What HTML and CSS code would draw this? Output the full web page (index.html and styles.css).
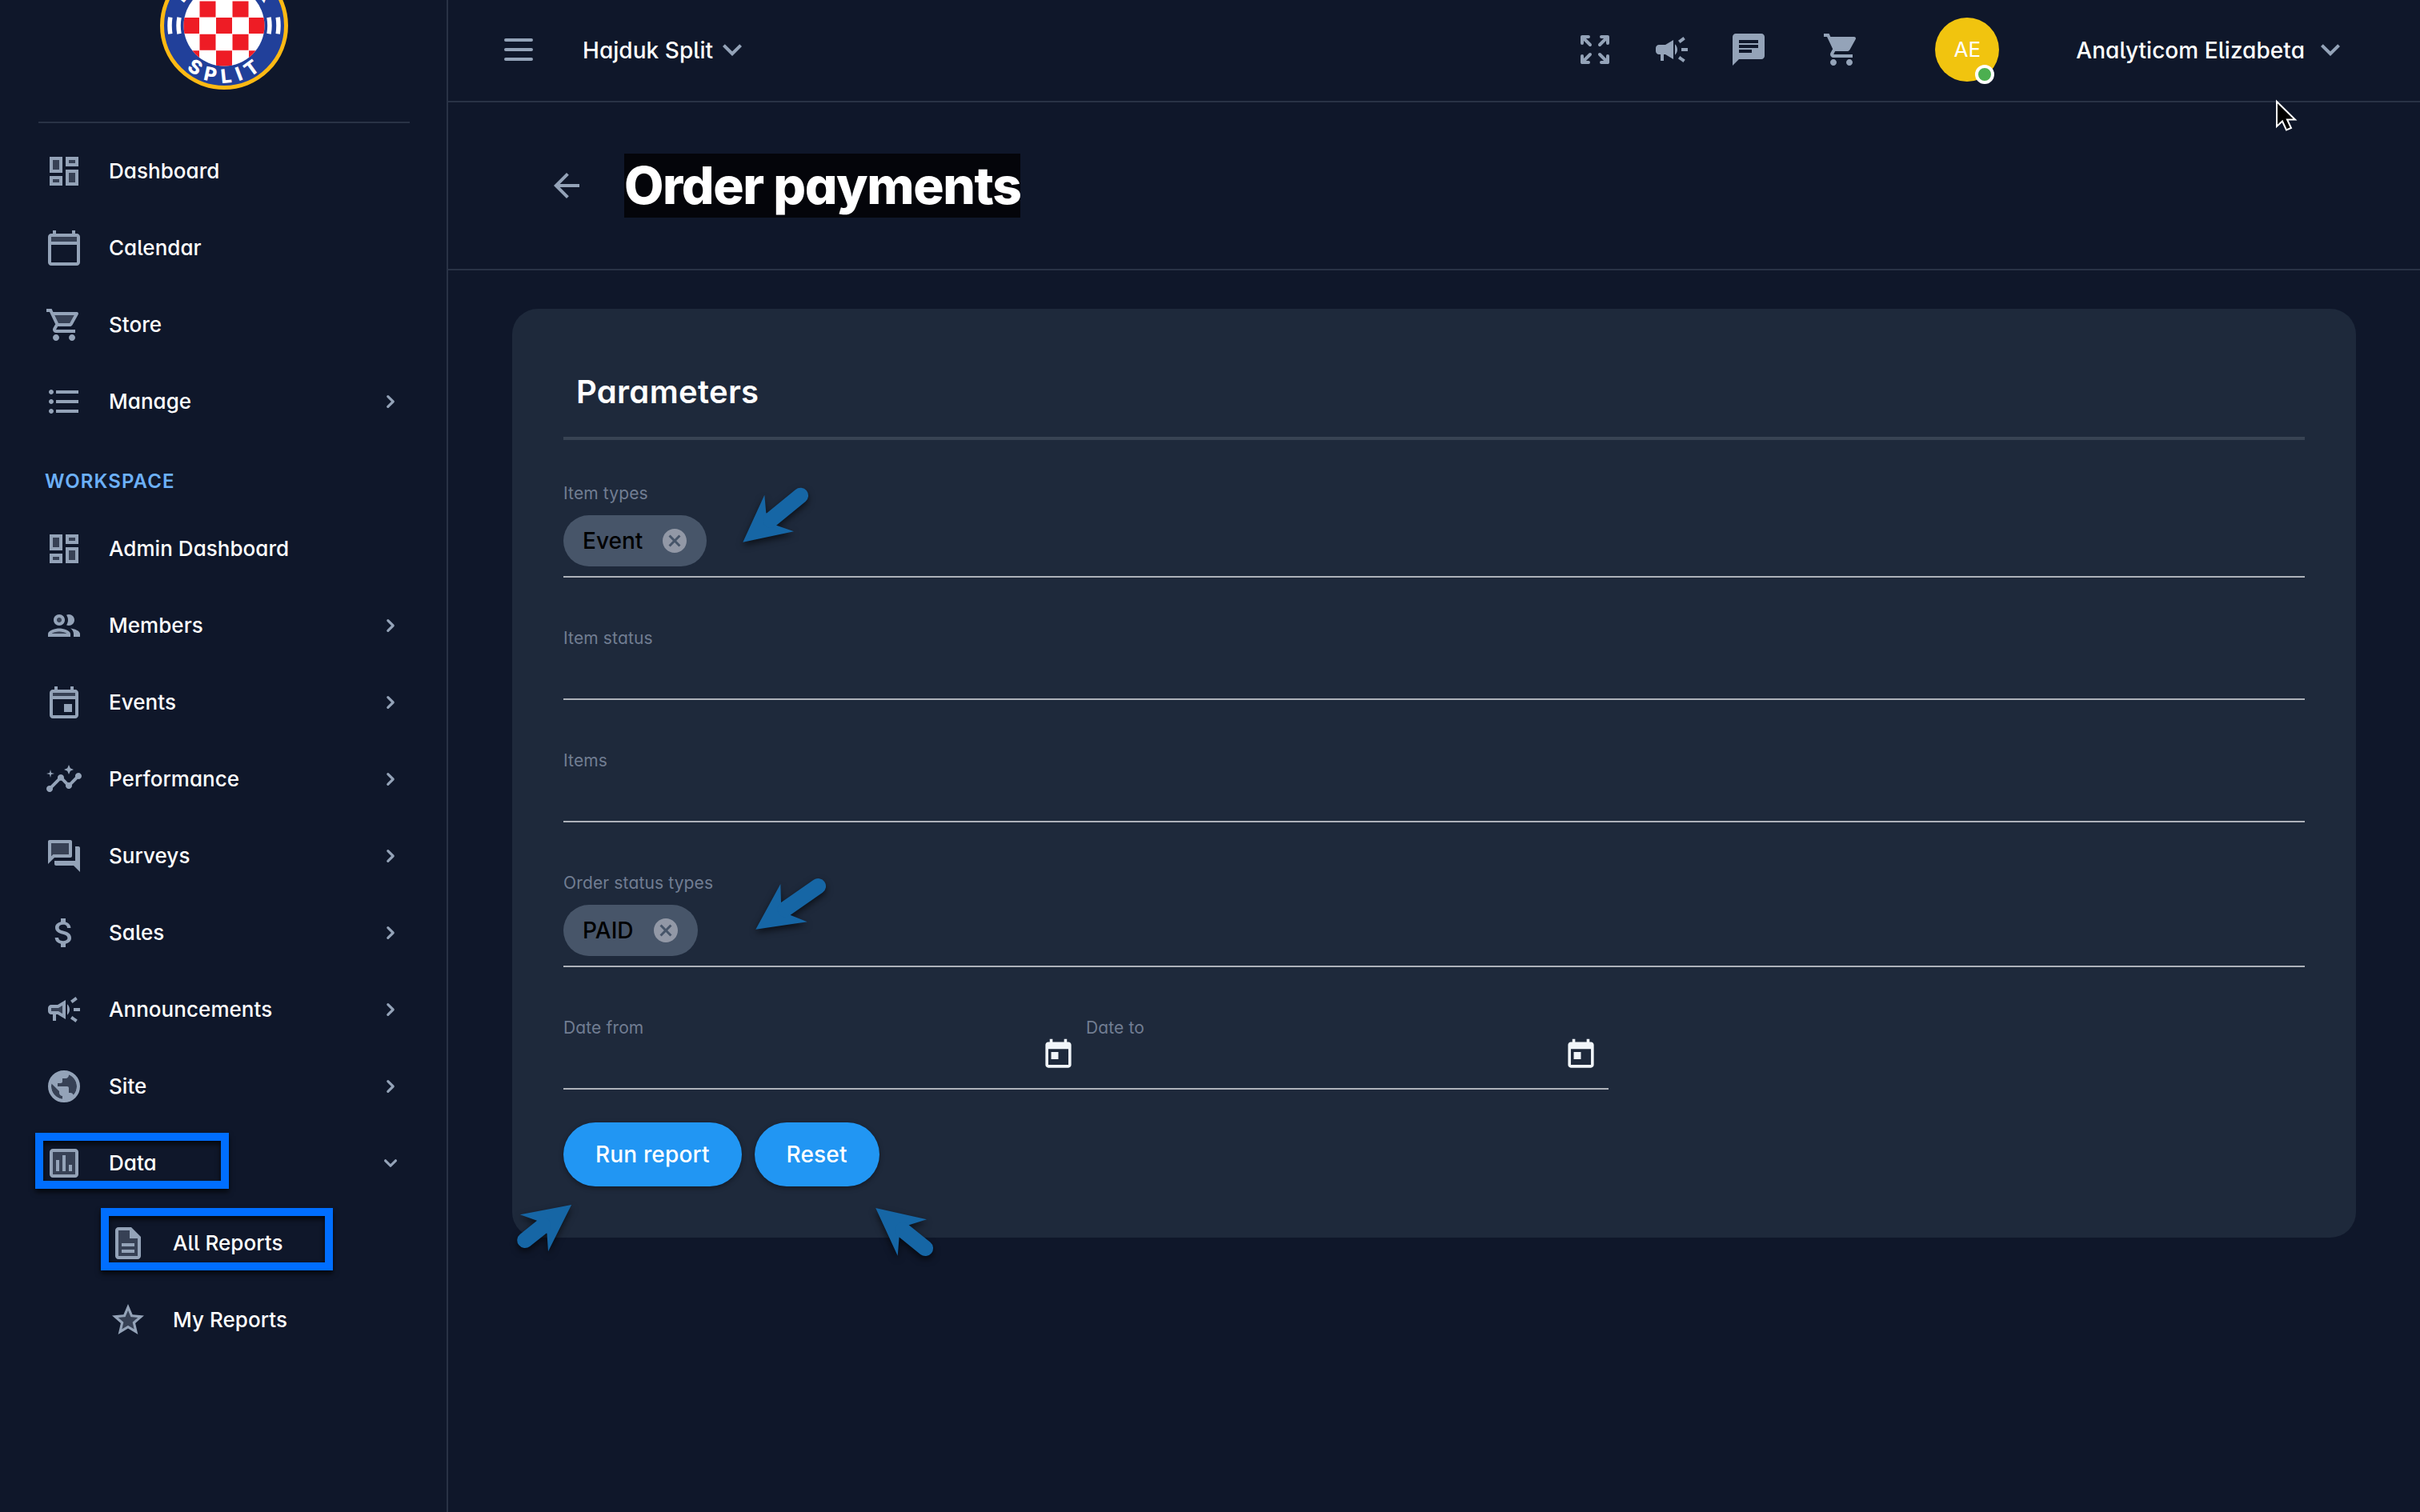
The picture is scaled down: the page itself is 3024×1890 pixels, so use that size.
FILE: index.html
```html
<!DOCTYPE html>
<html lang="en">
<head>
  <meta charset="UTF-8">
  <title>Order payments</title>
  <link rel="stylesheet" href="styles.css">
</head>
<body>

  <!-- icon sprite -->
  <svg class="sprite" xmlns="http://www.w3.org/2000/svg">
    <symbol id="i-dashboard" viewBox="0 0 24 24">
      <path opacity=".3" d="M5 5h4v6H5zM15 13h4v6h-4zM5 17h4v2H5zM15 5h4v2h-4z"/>
      <path d="M3 13h8V3H3v10zm2-8h4v6H5V5zm8 16h8V11h-8v10zm2-8h4v6h-4v-6zM13 3v6h8V3h-8zm6 4h-4V5h4v2zM3 21h8v-6H3v6zm2-4h4v2H5v-2z"/>
    </symbol>
    <symbol id="i-calendar" viewBox="0 0 24 24">
      <path opacity=".3" d="M4 5h16v3H4z"/>
      <path d="M20 3h-1V1h-2v2H7V1H5v2H4c-1.1 0-2 .9-2 2v16c0 1.1.9 2 2 2h16c1.1 0 2-.9 2-2V5c0-1.1-.9-2-2-2zm0 18H4V10h16v11zm0-13H4V5h16v3z"/>
    </symbol>
    <symbol id="i-store" viewBox="0 0 24 24">
      <path opacity=".3" d="M15.55 11l2.76-5H6.16l2.37 5z"/>
      <path d="M15.55 13c.75 0 1.41-.41 1.75-1.03l3.58-6.49c.37-.66-.11-1.48-.87-1.48H5.21l-.94-2H1v2h2l3.6 7.59-1.35 2.44C4.52 15.37 5.48 17 7 17h12v-2H7l1.1-2h7.45zM6.16 6h12.15l-2.76 5H8.53L6.16 6zM7 18c-1.1 0-1.99.9-1.99 2S5.9 22 7 22s2-.9 2-2-.9-2-2-2zm10 0c-1.1 0-1.99.9-1.99 2s.89 2 1.99 2 2-.9 2-2-.9-2-2-2z"/>
    </symbol>
    <symbol id="i-list" viewBox="0 0 24 24">
      <path d="M4 10.5c-.83 0-1.5.67-1.5 1.5s.67 1.5 1.5 1.5 1.5-.67 1.5-1.5-.67-1.5-1.5-1.5zm0-6c-.83 0-1.5.67-1.5 1.5S3.17 7.5 4 7.5 5.5 6.83 5.5 6 4.83 4.5 4 4.5zm0 12c-.83 0-1.5.68-1.5 1.5s.68 1.5 1.5 1.5 1.5-.68 1.5-1.5-.67-1.5-1.5-1.5zM7 19h14v-2H7v2zm0-6h14v-2H7v2zm0-8v2h14V5H7z"/>
    </symbol>
    <symbol id="i-group" viewBox="0 0 24 24">
      <path opacity=".3" d="M4.340 17h9.320c-.84-.58-2.870-1.250-4.660-1.250S5.180 16.420 4.340 17zM9 7a1.500 1.500 0 100 3 1.500 1.500 0 000-3z"/>
      <path d="M9 13.750c-2.340 0-7 1.170-7 3.500V19h14v-1.750c0-2.330-4.660-3.500-7-3.500zM4.340 17c.84-.58 2.870-1.250 4.660-1.250s3.820.67 4.660 1.250H4.340zM9 12c1.930 0 3.500-1.570 3.500-3.500S10.930 5 9 5 5.500 6.570 5.500 8.500 7.070 12 9 12zm0-5c.83 0 1.500.67 1.500 1.500S9.830 10 9 10s-1.500-.67-1.500-1.500S8.170 7 9 7zm7.040 6.810c1.160.84 1.960 1.960 1.960 3.440V19h4v-1.750c0-2.020-3.500-3.170-5.960-3.440zM15 12c1.930 0 3.500-1.570 3.500-3.500S16.930 5 15 5c-.54 0-1.040.13-1.500.35.63.89 1 1.980 1 3.150s-.37 2.260-1 3.150c.46.22.96.35 1.500.35z"/>
    </symbol>
    <symbol id="i-event" viewBox="0 0 24 24">
      <path opacity=".3" d="M5 6h14v2H5z"/>
      <path d="M19 4h-1V2h-2v2H8V2H6v2H5c-1.11 0-1.99.9-1.99 2L3 20c0 1.1.89 2 2 2h14c1.1 0 2-.9 2-2V6c0-1.1-.9-2-2-2zm0 16H5V10h14v10zm0-12H5V6h14v2zm-7 5h5v5h-5z"/>
    </symbol>
    <symbol id="i-insights" viewBox="0 0 24 24">
      <path d="M21 8c-1.45 0-2.26 1.44-1.93 2.51l-3.55 3.56c-.3-.09-.74-.09-1.04 0l-2.55-2.55C12.27 10.45 11.46 9 10 9c-1.45 0-2.27 1.44-1.93 2.52l-4.56 4.55C2.44 15.74 1 16.55 1 18c0 1.1.9 2 2 2 1.45 0 2.26-1.44 1.93-2.51l4.55-4.56c.3.09.74.09 1.04 0l2.55 2.55C12.73 16.55 13.54 18 15 18c1.45 0 2.27-1.44 1.93-2.52l3.56-3.55C21.56 12.26 23 11.45 23 10c0-1.1-.9-2-2-2zM15 9l.94-2.07L18 6l-2.06-.93L15 3l-.92 2.07L12 6l2.08.93zM3.5 11L4 9l2-.5L4 8l-.5-2L3 8l-2 .5L3 9z"/>
    </symbol>
    <symbol id="i-surveys" viewBox="0 0 24 24">
      <path opacity=".3" d="M15 4v7H5.17L4 12.17V4z"/>
      <path fill-rule="evenodd" d="M16 13c.55 0 1-.45 1-1V3c0-.55-.45-1-1-1H3c-.55 0-1 .45-1 1v14l4-4h10zM15 4v7H5.170L4 12.170V4zM21 6h-2v9H6v2c0 .55.45 1 1 1h11l4 4V7c0-.55-.45-1-1-1z"/>
    </symbol>
    <symbol id="i-dollar" viewBox="0 0 24 24">
      <path d="M11.8 10.9c-2.27-.59-3-1.2-3-2.15 0-1.09 1.01-1.85 2.7-1.85 1.78 0 2.44.85 2.5 2.1h2.21c-.07-1.72-1.12-3.3-3.21-3.81V3h-3v2.16c-1.94.42-3.5 1.68-3.5 3.61 0 2.31 1.91 3.46 4.7 4.13 2.5.6 3 1.48 3 2.41 0 .69-.49 1.79-2.7 1.79-2.06 0-2.87-.92-2.98-2.1h-2.2c.12 2.19 1.76 3.42 3.68 3.83V21h3v-2.15c1.95-.37 3.5-1.5 3.5-3.55 0-2.84-2.43-3.81-4.7-4.4z"/>
    </symbol>
    <symbol id="i-campaign" viewBox="0 0 24 24">
      <path opacity=".3" d="M8.550 11H4v2h4.550L11 14.470V9.530z"/>
      <path fill-rule="evenodd" d="M18 11v2h4v-2h-4zm-2 6.61c.96.71 2.21 1.65 3.2 2.39.4-.53.8-1.07 1.2-1.6-.99-.74-2.24-1.68-3.2-2.4-.4.54-.8 1.08-1.2 1.61zM20.4 5.6c-.4-.53-.8-1.07-1.2-1.6-.99.74-2.24 1.68-3.2 2.4.4.53.8 1.07 1.2 1.6.96-.72 2.21-1.65 3.2-2.4zM4 9c-1.1 0-2 .9-2 2v2c0 1.1.9 2 2 2h1v4h2v-4h1l5 3V6L8 9H4zM8.55 11H4v2h4.55L11 14.47V9.53zM15.5 12c0-1.33-.58-2.53-1.5-3.35v6.69c.92-.81 1.5-2.01 1.5-3.34z"/>
    </symbol>
    <symbol id="i-globe" viewBox="0 0 24 24">
      <circle cx="12" cy="12" r="9" fill="none" stroke="currentColor" stroke-width="2"/>
      <circle cx="12" cy="12" r="8.500" opacity=".3"/>
      <path fill-rule="evenodd" d="M12 3a9 9 0 100 18 9 9 0 000-18zM14.990 4.590V5c0 1.100-.9 2-2 2h-2v2c0 .55-.45 1-1 1h-2v2h6c.55 0 1 .45 1 1v3h1c.89 0 1.640.59 1.900 1.400C19.190 15.980 20 14.080 20 12c0-3.350-2.080-6.230-5.010-7.410zM8.990 16v-1l-4.780-4.780C4.080 10.790 4 11.390 4 12c0 4.070 3.060 7.430 6.990 7.930V18c-1.100 0-2-.9-2-2z"/>
    </symbol>
    <symbol id="i-chart" viewBox="0 0 24 24">
      <path opacity=".3" d="M5 5h14v14H5z"/>
      <path fill-rule="evenodd" d="M19 3H5c-1.100 0-2 .9-2 2v14c0 1.100.9 2 2 2h14c1.100 0 2-.9 2-2V5c0-1.100-.9-2-2-2zM5 5h14v14H5z"/>
      <path d="M7 10h2v7H7zM11 7h2v10h-2zM15 13h2v4h-2z"/>
    </symbol>
    <symbol id="i-doc" viewBox="0 0 24 24">
      <path opacity=".3" d="M13 4H6v16h12V9h-5z"/>
      <path d="M8 16h8v2H8zM8 12h8v2H8zM14 2H6c-1.1 0-2 .9-2 2v16c0 1.1.89 2 1.99 2H18c1.1 0 2-.9 2-2V8l-6-6zm4 18H6V4h7v5h5v11z"/>
    </symbol>
    <symbol id="i-star" viewBox="0 0 24 24">
      <path opacity=".3" d="M12 15.4l-3.76 2.27 1-4.28-3.32-2.88 4.38-.38L12 6.1l1.71 4.04 4.38.38-3.32 2.88 1 4.28z"/>
      <path fill-rule="evenodd" d="M22 9.24l-7.19-.62L12 2 9.19 8.63 2 9.24l5.46 4.73L5.82 21 12 17.27 18.18 21l-1.63-7.03zM12 15.4l-3.76 2.27 1-4.28-3.32-2.88 4.38-.38L12 6.1l1.71 4.04 4.38.38-3.32 2.88 1 4.28z"/>
    </symbol>
    <symbol id="i-right" viewBox="0 0 20 20">
      <path d="M7.293 14.707a1 1 0 010-1.414L10.586 10 7.293 6.707a1 1 0 011.414-1.414l4 4a1 1 0 010 1.414l-4 4a1 1 0 01-1.414 0z"/>
    </symbol>
    <symbol id="i-down" viewBox="0 0 20 20">
      <path d="M5.293 7.293a1 1 0 011.414 0L10 10.586l3.293-3.293a1 1 0 111.414 1.414l-4 4a1 1 0 01-1.414 0l-4-4a1 1 0 010-1.414z"/>
    </symbol>
    <symbol id="i-expand-more" viewBox="0 0 24 24">
      <path d="M16.59 8.59L12 13.17 7.41 8.59 6 10l6 6 6-6z"/>
    </symbol>
    <symbol id="i-menu" viewBox="0 0 24 24">
      <path d="M4 6h16M4 12h16M4 18h16" fill="none" stroke="currentColor" stroke-width="2" stroke-linecap="round"/>
    </symbol>
    <symbol id="i-fullscreen" viewBox="0 0 24 24">
      <path d="M4 8V4h4M4 4l5 5M16 4h4v4M20 4l-5 5M4 16v4h4M4 20l5-5M20 16v4h-4M20 20l-5-5" fill="none" stroke="currentColor" stroke-width="2" stroke-linecap="round" stroke-linejoin="round"/>
    </symbol>
    <symbol id="i-campaign-solid" viewBox="0 0 24 24">
      <path d="M18 11v2h4v-2h-4zm-2 6.61c.96.71 2.21 1.65 3.2 2.39.4-.53.8-1.07 1.2-1.6-.99-.74-2.24-1.68-3.2-2.4-.4.54-.8 1.08-1.2 1.61zM20.4 5.6c-.4-.53-.8-1.07-1.2-1.6-.99.74-2.24 1.68-3.2 2.4.4.53.8 1.07 1.2 1.6.96-.72 2.21-1.65 3.2-2.4zM4 9c-1.1 0-2 .9-2 2v2c0 1.1.9 2 2 2h1v4h2v-4h1l5 3V6L8 9H4zm11.5 3c0-1.33-.58-2.53-1.5-3.35v6.69c.92-.81 1.5-2.01 1.5-3.34z"/>
    </symbol>
    <symbol id="i-chat" viewBox="0 0 24 24">
      <path fill-rule="evenodd" d="M20 2H4c-1.1 0-1.99.9-1.99 2L2 22l4-4h14c1.1 0 2-.9 2-2V4c0-1.1-.9-2-2-2zM6 9h12v2H6V9zm8 5H6v-2h8v2zm4-6H6V6h12v2z"/>
    </symbol>
    <symbol id="i-cart-solid" viewBox="0 0 24 24">
      <path d="M7 18c-1.1 0-1.99.9-1.99 2S5.9 22 7 22s2-.9 2-2-.9-2-2-2zM1 2v2h2l3.6 7.59-1.35 2.45c-.16.28-.25.61-.25.96 0 1.1.9 2 2 2h12v-2H7.42c-.14 0-.25-.11-.25-.25l.03-.12.9-1.63h7.45c.75 0 1.41-.41 1.75-1.03l3.58-6.49c.08-.14.12-.31.12-.48 0-.55-.45-1-1-1H5.21l-.94-2H1zm16 16c-1.1 0-1.99.9-1.99 2s.89 2 1.99 2 2-.9 2-2-.9-2-2-2z"/>
    </symbol>
    <symbol id="i-back" viewBox="0 0 24 24">
      <path d="M20 11H7.83l5.59-5.59L12 4l-8 8 8 8 1.41-1.41L7.83 13H20v-2z"/>
    </symbol>
    <symbol id="i-cancel" viewBox="0 0 24 24">
      <path d="M12 2C6.47 2 2 6.47 2 12s4.47 10 10 10 10-4.47 10-10S17.53 2 12 2zm5 13.59L15.59 17 12 13.41 8.41 17 7 15.59 10.59 12 7 8.41 8.41 7 12 10.59 15.59 7 17 8.41 13.41 12 17 15.59z"/>
    </symbol>
    <symbol id="i-today" viewBox="0 0 24 24">
      <path d="M19 3h-1V1h-2v2H8V1H6v2H5c-1.11 0-1.99.9-1.99 2L3 19c0 1.1.89 2 2 2h14c1.1 0 2-.9 2-2V5c0-1.1-.9-2-2-2zm0 16H5V8h14v11zM7 10h5v5H7z"/>
    </symbol>
  </svg>

  <div class="layout">
    <aside class="sidebar">
      <div class="club-logo">
        <svg width="160" height="160" viewBox="0 0 160 160">
          <defs>
            <clipPath id="ball"><circle cx="80" cy="80" r="50.500"/></clipPath>
            <path id="arc-top" d="M23 80a57 57 0 01114 0"/>
            <path id="arc-bottom" d="M8.500 80a71.500 71.500 0 00143 0"/>
          </defs>
          <circle cx="80" cy="80" r="77.500" fill="#21409a" stroke="#fdb913" stroke-width="5"/>
          <circle cx="80" cy="80" r="50.500" fill="#fff"/>
          <g clip-path="url(#ball)" fill="#ee1c25">
            <path d="M29 28h20v20H29zM70 28h20v20H70zM111 28h20v20h-20z"/>
            <path d="M49.500 49.500h20v20h-20zM90.500 49.500h20v20h-20z"/>
            <path d="M29 70h20v20H29zM70 70h20v20H70zM111 70h20v20h-20z"/>
            <path d="M49.500 90.700h20v20h-20zM90.500 90.700h20v20h-20z"/>
            <path d="M29 111.300h20v20H29zM70 111.300h20v20H70zM111 111.300h20v20h-20z"/>
          </g>
          <g fill="none" stroke="#fff" stroke-width="5.500">
            <path d="M12.800 69.700a68 68 0 000 20.600M24 69.700a57 57 0 000 20.600M147.200 69.700a68 68 0 010 20.600M136 69.700a57 57 0 010 20.600"/>
          </g>
          <text class="logo-text"><textPath href="#arc-top" startOffset="51%">HAJDUK</textPath></text>
          <text class="logo-text logo-split"><textPath href="#arc-bottom" startOffset="51.500%">SPLIT</textPath></text>
        </svg>
      </div>

      <nav class="nav">
        <a class="nav-item"><svg class="icon"><use href="#i-dashboard"/></svg><span>Dashboard</span></a>
        <a class="nav-item"><svg class="icon"><use href="#i-calendar"/></svg><span>Calendar</span></a>
        <a class="nav-item"><svg class="icon"><use href="#i-store"/></svg><span>Store</span></a>
        <a class="nav-item"><svg class="icon"><use href="#i-list"/></svg><span>Manage</span><svg class="arrow"><use href="#i-right"/></svg></a>

        <div class="nav-group">WORKSPACE</div>

        <a class="nav-item"><svg class="icon"><use href="#i-dashboard"/></svg><span>Admin Dashboard</span></a>
        <a class="nav-item"><svg class="icon"><use href="#i-group"/></svg><span>Members</span><svg class="arrow"><use href="#i-right"/></svg></a>
        <a class="nav-item"><svg class="icon"><use href="#i-event"/></svg><span>Events</span><svg class="arrow"><use href="#i-right"/></svg></a>
        <a class="nav-item"><svg class="icon"><use href="#i-insights"/></svg><span>Performance</span><svg class="arrow"><use href="#i-right"/></svg></a>
        <a class="nav-item"><svg class="icon"><use href="#i-surveys"/></svg><span>Surveys</span><svg class="arrow"><use href="#i-right"/></svg></a>
        <a class="nav-item"><svg class="icon"><use href="#i-dollar"/></svg><span>Sales</span><svg class="arrow"><use href="#i-right"/></svg></a>
        <a class="nav-item"><svg class="icon"><use href="#i-campaign"/></svg><span>Announcements</span><svg class="arrow"><use href="#i-right"/></svg></a>
        <a class="nav-item"><svg class="icon"><use href="#i-globe"/></svg><span>Site</span><svg class="arrow"><use href="#i-right"/></svg></a>
        <a class="nav-item"><svg class="icon"><use href="#i-chart"/></svg><span>Data</span><svg class="arrow"><use href="#i-down"/></svg></a>
        <div class="nav-children">
          <a class="nav-item"><svg class="icon"><use href="#i-doc"/></svg><span>All Reports</span></a>
          <a class="nav-item"><svg class="icon"><use href="#i-star"/></svg><span>My Reports</span></a>
        </div>
      </nav>
    </aside>

    <div class="content">
      <header class="topbar">
        <svg class="icon"><use href="#i-menu"/></svg>
        <div class="club"><span>Hajduk Split</span><svg class="icon"><use href="#i-expand-more"/></svg></div>
        <div class="actions">
          <svg class="icon"><use href="#i-fullscreen"/></svg>
          <svg class="icon"><use href="#i-campaign-solid"/></svg>
          <svg class="icon"><use href="#i-chat"/></svg>
          <svg class="icon cart"><use href="#i-cart-solid"/></svg>
        </div>
        <div class="avatar">AE<span class="status"></span></div>
        <div class="user"><span>Analyticom Elizabeta</span><svg class="icon"><use href="#i-expand-more"/></svg></div>
      </header>

      <div class="page-header">
        <svg class="icon"><use href="#i-back"/></svg>
        <h1>Order payments</h1>
      </div>

      <main class="card">
        <h2>Parameters</h2>
        <div class="field first">
          <label>Item types</label>
          <div class="chip">Event<svg><use href="#i-cancel"/></svg></div>
        </div>
        <div class="field">
          <label>Item status</label>
        </div>
        <div class="field">
          <label>Items</label>
        </div>
        <div class="field">
          <label>Order status types</label>
          <div class="chip">PAID<svg><use href="#i-cancel"/></svg></div>
        </div>
        <div class="dates">
          <div class="field date">
            <label>Date from</label>
            <svg><use href="#i-today"/></svg>
          </div>
          <div class="field date">
            <label>Date to</label>
            <svg><use href="#i-today"/></svg>
          </div>
        </div>
        <div class="buttons">
          <button>Run report</button>
          <button>Reset</button>
        </div>
      </main>
    </div>
  </div>

  <!-- annotations over the page -->
  <div class="mark mark-data"></div>
  <div class="mark mark-reports"></div>
  <svg class="overlay" width="3024" height="1890" viewBox="0 0 3024 1890">
    <g class="pointer">
      <path d="M928.300 677.700L955.300 618.700 957.300 641 970.300 656.700 992 664.300z"/>
      <path class="shaft" d="M963 650L1000.300 619.500"/>
    </g>
    <g class="pointer">
      <path d="M944.300 1161.700L975.300 1105 976 1127.700 988 1144 1008.700 1152.300z"/>
      <path class="shaft" d="M981 1136.500L1022.300 1107.800"/>
    </g>
    <g class="pointer">
      <path d="M714.100 1506L649.900 1518.300 670.900 1525.700 683.500 1542 685 1564.300z"/>
      <path class="shaft" d="M679 1532L656 1550.300"/>
    </g>
    <g class="pointer">
      <path d="M1094.200 1510L1158 1524.300 1135.900 1531.300 1123.600 1546.700 1121.700 1569.700z"/>
      <path class="shaft" d="M1128 1537.500L1156.300 1560.300"/>
    </g>
    <path class="cursor" d="M2845 127v31l7-6.500 5 11 6-2.500-5-10.500h10z"/>
  </svg>

</body>
</html>
```
FILE: styles.css
```css
* {
  box-sizing: border-box;
}

body {
  font-family: 'Inter', sans-serif;
  font-feature-settings: 'cv11', 'cv05';
  font-size: 28px;
  font-weight: 500;
  letter-spacing: 0.05px;
  margin: 0;
  background-color: #0f172a;
  color: white;
}

.sprite {
  display: none;
}

.layout {
  display: flex;
  height: 1890px;
  overflow: hidden;
}

.icon {
  width: 48px;
  height: 48px;
  color: #94a3b8;
  fill: currentColor;
  flex: none;
}

/* sidebar */
.sidebar {
  width: 560px;
  flex: none;
  border-right: 2px solid #293245;
}

.club-logo {
  height: 154px;
  margin: 0 46px 0 48px;
  border-bottom: 2px solid #293245;
  display: flex;
  justify-content: center;
}

.club-logo svg {
  margin-top: -48px;
}

.logo-text {
  font-size: 24px;
  font-weight: 800;
  fill: white;
  text-anchor: middle;
  letter-spacing: 3.8px;
}

.logo-split {
  letter-spacing: 8px;
}

.nav {
  padding-top: 12px;
}

.nav-item {
  display: flex;
  align-items: center;
  height: 96px;
  padding: 0 54px 0 56px;
  font-size: 26px;
}

.nav-item span {
  margin-left: 32px;
  padding-bottom: 2px;
  flex: 1;
}

.arrow {
  width: 32px;
  height: 32px;
  fill: #94a3b8;
}

.nav-group {
  height: 88px;
  padding: 8px 56px 0;
  line-height: 88px;
  font-size: 24px;
  font-weight: 600;
  letter-spacing: 1.1px;
  color: #6cb0f8;
}

.nav-children {
  padding: 4px 0 0 80px;
}

/* top bar */
.content {
  flex: 1;
}

.topbar {
  height: 128px;
  padding: 0 88px 2px 64px;
  border-bottom: 2px solid #293245;
  display: flex;
  align-items: center;
}

.club,
.user {
  display: flex;
  align-items: center;
}

.club span,
.user span {
  padding-top: 2px;
}

.club {
  margin-left: 56px;
}

.actions {
  margin-left: auto;
  display: flex;
  gap: 48px;
}

.actions .cart {
  margin-left: 20px;
}

.avatar {
  position: relative;
  width: 80px;
  height: 80px;
  margin: 0 96px 0 93px;
  border-radius: 50%;
  background-color: #f1c40f;
  font-size: 26px;
  font-weight: 400;
  line-height: 80px;
  text-align: center;
}

.status {
  position: absolute;
  right: 6px;
  bottom: -3px;
  width: 24px;
  height: 24px;
  border: 4px solid white;
  border-radius: 50%;
  background-color: #4caf50;
}

.user .icon {
  margin-left: 8px;
}

/* page title */
.page-header {
  height: 210px;
  padding: 0 124px;
  border-bottom: 2px solid #293245;
  display: flex;
  align-items: center;
}

.page-header h1 {
  margin: 0 0 0 48px;
  background-color: #04050a;
  font-size: 64px;
  font-weight: 800;
  line-height: 80px;
  letter-spacing: -1.4px;
}

/* report parameters */
.card {
  height: 1161px;
  margin: 48px 80px 0;
  padding: 64px;
  border-radius: 32px;
  background-color: #1e293b;
}

.card h2 {
  height: 100px;
  margin: 0;
  padding: 10px 16px 0;
  border-bottom: 4px solid #384353;
  font-size: 40px;
  font-weight: 600;
  line-height: 60px;
  letter-spacing: 0.3px;
}

.field {
  padding-top: 63px;
  min-height: 153px;
  border-bottom: 2px solid #aeb2ba;
}

.field.first {
  padding-top: 54px;
}

.field label {
  display: block;
  height: 24px;
  font-size: 21px;
  font-weight: 400;
  line-height: 26px;
  letter-spacing: 0.14px;
  color: #717d92;
}

.chip {
  display: inline-flex;
  align-items: center;
  height: 64px;
  margin: 16px 0 12px;
  padding: 0 22px 0 24px;
  border-radius: 32px;
  background-color: #475569;
  color: black;
  letter-spacing: 0;
  vertical-align: top;
}

.chip svg {
  width: 36px;
  height: 36px;
  margin-left: 22px;
  fill: #9298a6;
}

.dates {
  display: flex;
  width: 1306px;
}

.field.date {
  flex: 1;
}

.date svg {
  display: block;
  width: 43px;
  height: 43px;
  margin: 1px 13px 0 auto;
  fill: #f1f5f9;
}

.buttons {
  display: flex;
  gap: 16px;
  margin-top: 41px;
}

.buttons button {
  height: 80px;
  padding: 0 40px;
  border: none;
  border-radius: 40px;
  background-color: #2196f3;
  color: white;
  font: inherit;
  font-feature-settings: inherit;
  letter-spacing: 0.15px;
  box-shadow: 0 2px 6px rgba(0, 0, 0, 0.4);
}

/* annotations */
.mark {
  position: absolute;
  border: 10px solid #006eff;
  box-shadow: 0 4px 6px rgba(0, 0, 0, 0.7), inset 0 4px 6px rgba(0, 0, 0, 0.7);
}

.mark-data {
  left: 44px;
  top: 1416px;
  width: 242px;
  height: 70px;
}

.mark-reports {
  left: 126px;
  top: 1510px;
  width: 290px;
  height: 78px;
}

.overlay {
  position: absolute;
  left: 0;
  top: 0;
}

.pointer {
  fill: #1666a5;
  filter: drop-shadow(0 4px 4px rgba(0, 0, 0, 0.6));
}

.shaft {
  stroke: #1666a5;
  stroke-width: 19.5;
  stroke-linecap: round;
}

.cursor {
  fill: black;
  stroke: white;
  stroke-width: 2;
}
```
